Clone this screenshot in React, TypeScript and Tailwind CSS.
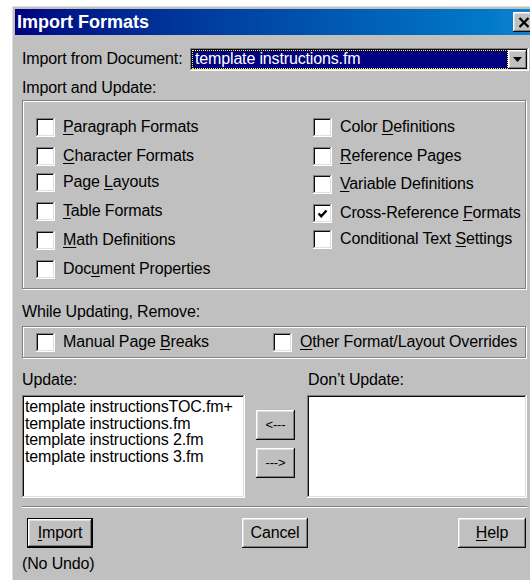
const raised =
  "bg-[#c0c0c0] shadow-[inset_-1px_-1px_#0a0a0a,inset_1px_1px_#ffffff,inset_-2px_-2px_#808080,inset_2px_2px_#dfdfdf]";
const sunken =
  "shadow-[inset_-1px_-1px_#ffffff,inset_1px_1px_#808080,inset_-2px_-2px_#dfdfdf,inset_2px_2px_#0a0a0a]";
const etched = "border border-[#808080] shadow-[inset_1px_1px_#ffffff,1px_1px_#ffffff]";

type Label = { pre: string; mn?: string; post?: string };

function Mnemonic({ pre, mn, post }: Label) {
  return (
    <span className="whitespace-nowrap">
      {pre}
      {mn && <u className="underline-offset-2">{mn}</u>}
      {post}
    </span>
  );
}

function Check({ checked }: { checked?: boolean }) {
  return (
    <span className={`flex h-[19px] w-[19px] shrink-0 items-center justify-center bg-white ${sunken}`}>
      {checked && (
        <svg width="11" height="11" viewBox="0 0 11 11">
          <path d="M1.5 5.5 L4.2 8.2 L9.5 2.5" stroke="#000" strokeWidth="2.4" fill="none" />
        </svg>
      )}
    </span>
  );
}

function CheckRow({ label, checked, mt }: { label: Label; checked?: boolean; mt: string }) {
  return (
    <div className={`flex h-[26px] items-center gap-[8px] ${mt}`}>
      <Check checked={checked} />
      <Mnemonic {...label} />
    </div>
  );
}

function Button({ children, w, isDefault }: { children: React.ReactNode; w: string; isDefault?: boolean }) {
  if (isDefault) {
    return (
      <div className={`h-[30px] ${w} border border-black`}>
        <div className={`flex h-full w-full items-center justify-center ${raised}`}>{children}</div>
      </div>
    );
  }
  return <div className={`flex h-[30px] ${w} items-center justify-center ${raised}`}>{children}</div>;
}

const leftItems: { label: Label; mt: string; checked?: boolean }[] = [
  { label: { pre: "", mn: "P", post: "aragraph Formats" }, mt: "mt-0" },
  { label: { pre: "", mn: "C", post: "haracter Formats" }, mt: "mt-[3px]" },
  { label: { pre: "Page ", mn: "L", post: "ayouts" }, mt: "mt-0" },
  { label: { pre: "", mn: "T", post: "able Formats" }, mt: "mt-[3px]" },
  { label: { pre: "", mn: "M", post: "ath Definitions" }, mt: "mt-[3px]" },
  { label: { pre: "Doc", mn: "u", post: "ment Properties" }, mt: "mt-[3px]" },
];

const rightItems: { label: Label; mt: string; checked?: boolean }[] = [
  { label: { pre: "Color ", mn: "D", post: "efinitions" }, mt: "mt-0" },
  { label: { pre: "", mn: "R", post: "eference Pages" }, mt: "mt-[3px]" },
  { label: { pre: "", mn: "V", post: "ariable Definitions" }, mt: "mt-[2px]" },
  { label: { pre: "Cross-Reference ", mn: "F", post: "ormats" }, mt: "mt-[3px]", checked: true },
  { label: { pre: "Conditional Text ", mn: "S", post: "ettings" }, mt: "mt-0" },
];

const updateFiles = [
  "template instructionsTOC.fm+",
  "template instructions.fm",
  "template instructions 2.fm",
  "template instructions 3.fm",
];

export default function App() {
  return (
    <div className="h-[580px] w-[530px] overflow-hidden bg-white pl-[11px] pt-[5px] font-['Liberation_Sans',Arial,sans-serif] text-[16px] leading-[18px] tracking-[-0.15px] text-black">
      <div className={`h-[600px] w-[530px] p-[4px] ${raised}`}>
        {/* title bar */}
        <div className="flex h-[26px] items-center justify-between bg-gradient-to-r from-[#000080] to-[#1084d0] pl-[2px] pr-[2px]">
          <span className="text-[18px] font-bold tracking-normal text-white">Import Formats</span>
          <div className={`flex h-[20px] w-[22px] items-center justify-center ${raised}`}>
            <svg width="12" height="11" viewBox="0 0 12 11">
              <path d="M1.5 1 L10.5 10 M10.5 1 L1.5 10" stroke="#000" strokeWidth="2.2" />
            </svg>
          </div>
        </div>

        <div className="px-[7px]">
          {/* source document */}
          <div className="mt-[13px] flex h-[22px] items-center">
            <span className="w-[168px]">Import from Document:</span>
            <div className={`flex h-[23px] w-[339px] items-center bg-white p-[2px] ${sunken}`}>
              <div className="flex h-full flex-1 items-center border border-dotted border-[#ffff00] bg-[#000080] pl-[2px] text-white">
                template instructions.fm
              </div>
              <div className={`flex h-full w-[19px] items-center justify-center ${raised}`}>
                <svg width="9" height="5" viewBox="0 0 9 5">
                  <path d="M0 0 H9 L4.5 5 Z" fill="#000" />
                </svg>
              </div>
            </div>
          </div>

          <div className="mt-[9px] h-[18px]">Import and Update:</div>
          <div className={`mt-[3px] flex h-[189px] w-[504px] pl-[13px] pt-[13px] ${etched}`}>
            <div className="flex w-[277px] flex-col">
              {leftItems.map((it, i) => (
                <CheckRow key={i} {...it} />
              ))}
            </div>
            <div className="flex flex-col">
              {rightItems.map((it, i) => (
                <CheckRow key={i} {...it} />
              ))}
            </div>
          </div>

          <div className="mt-[14px] h-[18px]">While Updating, Remove:</div>
          <div className={`mt-[5px] flex h-[32px] w-[504px] items-center pl-[13px] ${etched}`}>
            <div className="w-[237px]">
              <CheckRow label={{ pre: "Manual Page ", mn: "B", post: "reaks" }} mt="mt-0" />
            </div>
            <CheckRow label={{ pre: "", mn: "O", post: "ther Format/Layout Overrides" }} mt="mt-0" />
          </div>

          <div className="mt-[13px] flex h-[18px]">
            <span className="w-[286px]">Update:</span>
            <span>Don’t Update:</span>
          </div>
          <div className="mt-[6px] flex h-[103px]">
            <div className={`h-full w-[223px] bg-white pl-[3px] pt-[4px] leading-[16.5px] ${sunken}`}>
              {updateFiles.map((f) => (
                <div key={f} className="whitespace-nowrap">
                  {f}
                </div>
              ))}
            </div>
            <div className="ml-[11px] flex flex-col gap-[8px] pt-[15px]">
              <Button w="w-[39px]">
                <span className="text-[13px]">&lt;---</span>
              </Button>
              <Button w="w-[39px]">
                <span className="text-[13px]">---&gt;</span>
              </Button>
            </div>
            <div className={`ml-[12px] h-full w-[220px] bg-white ${sunken}`} />
          </div>

          <div className="mt-[8px] h-[2px] w-[505px] border-t border-b border-t-[#808080] border-b-white" />

          <div className="mt-[10px] flex items-center">
            <div className="ml-[5px]">
              <Button w="w-[66px]" isDefault>
                <Mnemonic pre="" mn="I" post="mport" />
              </Button>
            </div>
            <div className="ml-[149px]">
              <Button w="w-[66px]">Cancel</Button>
            </div>
            <div className="ml-[150px]">
              <Button w="w-[68px]">
                <Mnemonic pre="" mn="H" post="elp" />
              </Button>
            </div>
          </div>
          <div className="mt-[7px] h-[18px]">(No Undo)</div>
        </div>
      </div>
    </div>
  );
}
